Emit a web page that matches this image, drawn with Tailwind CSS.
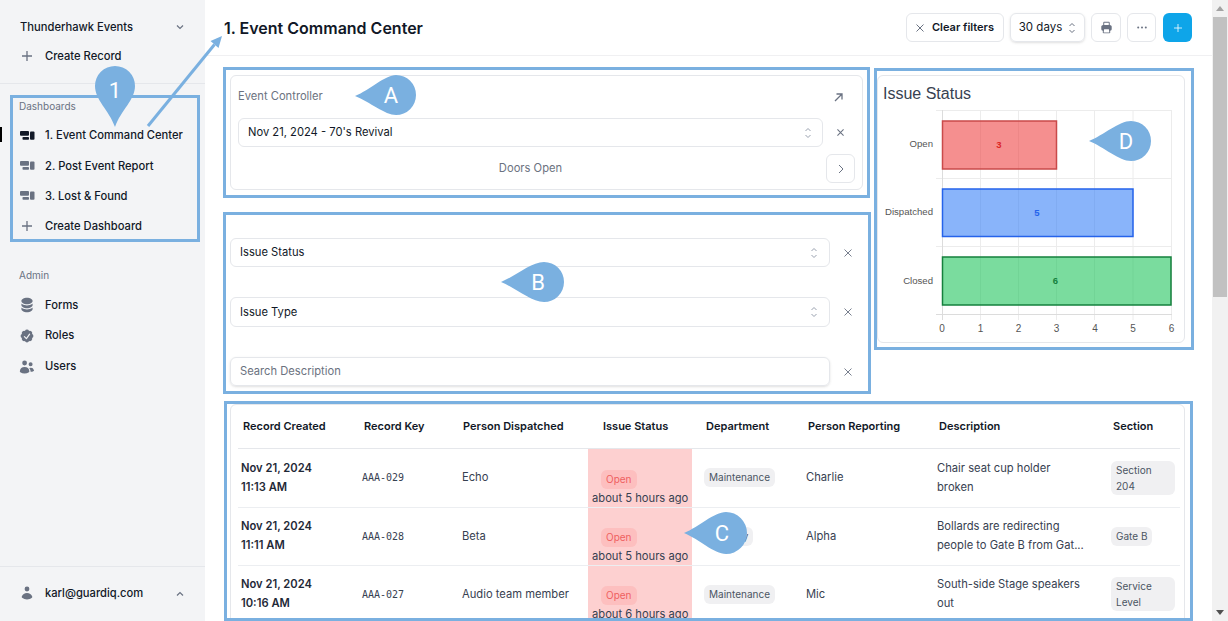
<!DOCTYPE html>
<html lang="en">
<head>
  <meta charset="UTF-8">
  <meta name="viewport" content="width=device-width, initial-scale=1.0">
  <title>Event Command Center</title>
  <script src="https://cdn.jsdelivr.net/npm/@tailwindcss/browser@4"></script>
</head>
<body class="bg-white overflow-hidden">
<div class="relative flex w-[1228px] h-[621px] overflow-hidden font-['Inter',sans-serif] text-[11.2px] text-gray-900">

  <!-- Sidebar -->
  <aside class="w-[205px] shrink-0 h-full bg-[#f3f4f6] flex flex-col font-medium text-[#111827]">
    <div class="h-[84px] shrink-0 border-b border-[#e5e7eb] pt-[13px] px-[20px]">
      <div class="flex items-center justify-between h-[28px]">
        <span>Thunderhawk Events</span>
        <svg class="w-[10px] h-[10px] text-gray-500" viewBox="0 0 10 10" fill="none" stroke="currentColor" stroke-width="1.2"><path d="M2 3.5 5 6.5 8 3.5"/></svg>
      </div>
      <div class="flex items-center h-[30px] gap-[13px]">
        <svg class="w-[10px] h-[10px] ml-[2px] text-gray-500" viewBox="0 0 10 10" fill="none" stroke="currentColor" stroke-width="1.3"><path d="M5 0v10M0 5h10"/></svg>
        <span>Create Record</span>
      </div>
    </div>

    <div class="pt-[16px] px-[19px]">
      <div class="h-[13px] text-[10px] leading-[13px] text-gray-500 font-normal">Dashboards</div>
      <div class="relative flex items-center h-[31px] mt-[7px] gap-[10px]">
        <span class="absolute left-[-19px] top-[7px] w-[2px] h-[15px] bg-black"></span>
        <svg class="w-4 h-4 text-[#111827]" viewBox="0 0 16 16" fill="currentColor"><rect x="1" y="3" width="9" height="4.7" rx="1"/><rect x="3.5" y="9" width="6.5" height="2.8" rx=".8"/><rect x="11" y="3.5" width="4.5" height="8.3" rx="1"/></svg>
        <span>1. Event Command Center</span>
      </div>
      <div class="flex items-center h-[30px] gap-[10px]">
        <svg class="w-4 h-4 text-gray-500" viewBox="0 0 16 16" fill="currentColor"><rect x="1" y="3" width="9" height="4.7" rx="1"/><rect x="3.5" y="9" width="6.5" height="2.8" rx=".8"/><rect x="11" y="3.5" width="4.5" height="8.3" rx="1"/></svg>
        <span>2. Post Event Report</span>
      </div>
      <div class="flex items-center h-[30px] gap-[10px]">
        <svg class="w-4 h-4 text-gray-500" viewBox="0 0 16 16" fill="currentColor"><rect x="1" y="3" width="9" height="4.7" rx="1"/><rect x="3.5" y="9" width="6.5" height="2.8" rx=".8"/><rect x="11" y="3.5" width="4.5" height="8.3" rx="1"/></svg>
        <span>3. Lost &amp; Found</span>
      </div>
      <div class="flex items-center h-[30px] gap-[13px]">
        <svg class="w-[10px] h-[10px] ml-[3px] text-gray-500" viewBox="0 0 10 10" fill="none" stroke="currentColor" stroke-width="1.3"><path d="M5 0v10M0 5h10"/></svg>
        <span>Create Dashboard</span>
      </div>
    </div>

    <div class="pt-[28px] px-[19px] flex-1">
      <div class="h-[13px] text-[10px] leading-[13px] text-gray-500 font-normal">Admin</div>
      <div class="flex items-center h-[30px] mt-[8px] gap-[10px]">
        <svg class="w-4 h-4 text-gray-500" viewBox="0 0 20 20" fill="currentColor"><path d="M10 1c3.866 0 7 1.79 7 4s-3.134 4-7 4-7-1.79-7-4 3.134-4 7-4zm5.694 8.13c.464-.264.91-.583 1.306-.952V10c0 2.21-3.134 4-7 4s-7-1.79-7-4V8.178c.396.37.842.688 1.306.953C5.838 10.006 7.854 10.5 10 10.5s4.162-.494 5.694-1.37zM3 13.179V15c0 2.21 3.134 4 7 4s7-1.79 7-4v-1.822c-.396.37-.842.688-1.306.953-1.532.875-3.548 1.369-5.694 1.369s-4.162-.494-5.694-1.37A7.009 7.009 0 013 13.179z"/></svg>
        <span>Forms</span>
      </div>
      <div class="flex items-center h-[31px] gap-[10px]">
        <svg class="w-4 h-4 text-gray-500" viewBox="0 0 20 20" fill="currentColor"><path fill-rule="evenodd" clip-rule="evenodd" d="M16.403 12.652a3 3 0 000-5.304 3 3 0 00-3.75-3.751 3 3 0 00-5.305 0 3 3 0 00-3.751 3.75 3 3 0 000 5.305 3 3 0 003.75 3.751 3 3 0 005.305 0 3 3 0 003.751-3.75zm-2.546-4.46a.75.75 0 00-1.214-.883l-3.483 4.79-1.88-1.88a.75.75 0 10-1.06 1.061l2.5 2.5a.75.75 0 001.137-.089l4-5.5z"/></svg>
        <span>Roles</span>
      </div>
      <div class="flex items-center h-[31px] gap-[10px]">
        <svg class="w-4 h-4 text-gray-500" viewBox="0 0 20 20" fill="currentColor"><path d="M7 8a3 3 0 100-6 3 3 0 000 6zM14.5 9a2.5 2.5 0 100-5 2.5 2.5 0 000 5zM1.615 16.428a1.224 1.224 0 01-.569-1.175 6.002 6.002 0 0111.908 0c.058.467-.172.92-.57 1.174A9.953 9.953 0 017 18a9.953 9.953 0 01-5.385-1.572zM14.5 16h-.106c.07-.297.088-.611.048-.933a7.47 7.47 0 00-1.588-3.755 4.502 4.502 0 015.874 2.636.818.818 0 01-.36.98A7.465 7.465 0 0114.5 16z"/></svg>
        <span>Users</span>
      </div>
    </div>

    <div class="h-[55px] shrink-0 border-t border-[#e5e7eb] px-[19px] flex items-center justify-between pb-[1px]">
      <div class="flex items-center gap-[10px]">
        <svg class="w-4 h-4 text-gray-500" viewBox="0 0 20 20" fill="currentColor"><path d="M10 8a3 3 0 100-6 3 3 0 000 6zM3.465 14.493a1.23 1.23 0 00.41 1.412A9.957 9.957 0 0010 18c2.31 0 4.438-.784 6.125-2.095a1.23 1.23 0 00.41-1.412A6.997 6.997 0 0010 10a6.997 6.997 0 00-6.535 4.493z"/></svg>
        <span>karl@guardiq.com</span>
      </div>
      <svg class="w-[10px] h-[10px] mr-[1px] text-gray-500" viewBox="0 0 10 10" fill="none" stroke="currentColor" stroke-width="1.2"><path d="M2 6.5 5 3.5 8 6.5"/></svg>
    </div>
  </aside>

  <!-- Main -->
  <main class="w-[1007px] shrink-0 h-full flex flex-col overflow-hidden">
    <header class="h-[56px] shrink-0 border-b border-[#f0f0f2] pl-[19px] pr-[20px] flex items-center justify-between">
      <h1 class="text-[16px] font-semibold text-[#111827]">1. Event Command Center</h1>
      <div class="flex items-center gap-[6px]">
        <button class="h-[29px] w-[98px] flex items-center justify-center gap-[8px] border border-[#e5e7eb] rounded-md font-semibold text-[11px] text-[#111827]">
          <svg class="w-[8px] h-[8px] text-gray-500" viewBox="0 0 8 8" fill="none" stroke="currentColor" stroke-width="1"><path d="M.5.5l7 7M7.5.5l-7 7"/></svg>
          Clear filters
        </button>
        <button class="h-[29px] w-[75px] flex items-center justify-center gap-[6px] border border-[#e5e7eb] shadow-sm rounded-md text-[11.5px] text-[#111827]">
          30 days
          <svg class="w-[8px] h-[12px] text-gray-500" viewBox="0 0 8 12" fill="none" stroke="currentColor" stroke-width="1"><path d="M1.5 4 4 1.5 6.5 4M1.5 8 4 10.5 6.5 8"/></svg>
        </button>
        <button class="h-[29px] w-[30px] flex items-center justify-center border border-[#e5e7eb] rounded-md">
          <svg class="w-[13px] h-[13px] text-gray-500" viewBox="0 0 20 20" fill="currentColor"><path fill-rule="evenodd" clip-rule="evenodd" d="M5 2.75C5 1.784 5.784 1 6.75 1h6.5c.966 0 1.75.784 1.75 1.75v3.552c.377.046.752.097 1.126.153A2.212 2.212 0 0118 8.653v4.097A2.25 2.25 0 0115.75 15h-.241l.305 1.984A1.75 1.75 0 0114.084 19H5.915a1.75 1.75 0 01-1.73-2.016L4.492 15H4.25A2.25 2.25 0 012 12.75V8.653c0-1.082.775-2.034 1.874-2.198.374-.056.75-.107 1.127-.153L5 2.75zm8.5 3.397a41.533 41.533 0 00-7 0V2.75a.25.25 0 01.25-.25h6.5a.25.25 0 01.25.25v3.397zM6.608 12.5a.25.25 0 00-.247.212l-.693 4.5a.25.25 0 00.247.288h8.17a.25.25 0 00.246-.288l-.692-4.5a.25.25 0 00-.247-.212H6.608z"/></svg>
        </button>
        <button class="h-[29px] w-[29px] flex items-center justify-center border border-[#e5e7eb] rounded-md">
          <svg class="w-[10px] h-[3px] text-gray-500" viewBox="0 0 10 3" fill="currentColor"><circle cx="1.2" cy="1.5" r="1"/><circle cx="5" cy="1.5" r="1"/><circle cx="8.8" cy="1.5" r="1"/></svg>
        </button>
        <button class="h-[29px] w-[29px] flex items-center justify-center rounded-md bg-[#0ea5e9] ml-[1px]">
          <svg class="w-[8px] h-[8px] text-white/80" viewBox="0 0 8 8" fill="none" stroke="currentColor" stroke-width="1"><path d="M4 0v8M0 4h8"/></svg>
        </button>
      </div>
    </header>

    <div class="pl-[25px] pt-[19px] flex-1 min-h-0 flex flex-col">
      <div class="flex gap-[14px] h-[329px] shrink-0">
        <!-- Left column -->
        <div class="w-[633px] shrink-0">
          <section class="h-[115px] border border-[#e5e7eb] rounded-md px-[7px] relative">
            <div class="flex items-center justify-between h-[42px] pr-[12px]">
              <span class="text-[#6b7280] mb-[2px]">Event Controller</span>
              <svg class="w-[9px] h-[9px] text-gray-500" viewBox="0 0 9 9" fill="none" stroke="currentColor" stroke-width="1.3"><path d="M1 8 8 1M2.5 1H8v5.5"/></svg>
            </div>
            <div class="flex items-center">
              <div class="w-[585px] h-[29px] border border-[#e5e7eb] rounded-md px-[9px] flex items-center justify-between">
                <span class="text-[#111827]">Nov 21, 2024 - 70's Revival</span>
                <svg class="w-[8px] h-[12px] mr-[1px] text-gray-400" viewBox="0 0 8 12" fill="none" stroke="currentColor" stroke-width="1"><path d="M1.5 4 4 1.5 6.5 4M1.5 8 4 10.5 6.5 8"/></svg>
              </div>
              <svg class="w-[7px] h-[7px] ml-[14px] text-gray-500" viewBox="0 0 8 8" fill="none" stroke="currentColor" stroke-width="1.2"><path d="M.5.5l7 7M7.5.5l-7 7"/></svg>
            </div>
            <div class="flex items-center justify-center h-[30px] mt-[6px] text-[#6b7280] pr-[32px]">Doors Open</div>
            <button class="absolute right-[7px] top-[78px] w-[29px] h-[29px] border border-[#e5e7eb] rounded-md flex items-center justify-center">
              <svg class="w-[6px] h-[10px] text-gray-500" viewBox="0 0 6 10" fill="none" stroke="currentColor" stroke-width="1"><path d="M1 1l4 4-4 4"/></svg>
            </button>
          </section>

          <section class="pt-[48px] flex flex-col gap-[30px]">
            <div class="flex items-center">
              <div class="w-[600px] h-[29px] border border-[#e5e7eb] rounded-md px-[9px] flex items-center justify-between">
                <span class="text-[#111827]">Issue Status</span>
                <svg class="w-[8px] h-[12px] mr-[2px] text-gray-400" viewBox="0 0 8 12" fill="none" stroke="currentColor" stroke-width="1"><path d="M1.5 4 4 1.5 6.5 4M1.5 8 4 10.5 6.5 8"/></svg>
              </div>
              <svg class="w-[8px] h-[8px] ml-[14px] text-gray-500" viewBox="0 0 8 8" fill="none" stroke="currentColor" stroke-width=".9"><path d="M.5.5l7 7M7.5.5l-7 7"/></svg>
            </div>
            <div class="flex items-center">
              <div class="w-[600px] h-[30px] border border-[#e5e7eb] rounded-md px-[9px] flex items-center justify-between">
                <span class="text-[#111827]">Issue Type</span>
                <svg class="w-[8px] h-[12px] mr-[2px] text-gray-400" viewBox="0 0 8 12" fill="none" stroke="currentColor" stroke-width="1"><path d="M1.5 4 4 1.5 6.5 4M1.5 8 4 10.5 6.5 8"/></svg>
              </div>
              <svg class="w-[8px] h-[8px] ml-[14px] text-gray-500" viewBox="0 0 8 8" fill="none" stroke="currentColor" stroke-width=".9"><path d="M.5.5l7 7M7.5.5l-7 7"/></svg>
            </div>
            <div class="flex items-center">
              <div class="w-[600px] h-[29px] border border-[#e5e7eb] shadow-sm rounded-md px-[9px] flex items-center">
                <span class="text-[#6b7280]">Search Description</span>
              </div>
              <svg class="w-[8px] h-[8px] ml-[14px] text-gray-500" viewBox="0 0 8 8" fill="none" stroke="currentColor" stroke-width=".9"><path d="M.5.5l7 7M7.5.5l-7 7"/></svg>
            </div>
          </section>
        </div>

        <!-- Chart -->
        <section class="w-[308px] h-[268px] shrink-0 border border-[#e5e7eb] rounded-md overflow-hidden">
          <svg width="306" height="266" viewBox="878 76 306 266" class="block font-['Liberation_Sans',sans-serif]">
            <text x="883" y="99" font-size="16" fill="#374151">Issue Status</text>
            <g stroke="#ececec" stroke-width="1">
              <path d="M936 110.5H1172M936 178.5H1172M936 246.5H1172"/>
              <path d="M980.5 110V320M1018.5 110V320M1056.5 110V320M1094.5 110V320M1133 110V320M1171.5 110V320"/>
            </g>
            <path d="M936 314.5H1172M942.5 110V320" stroke="#dcdcdc" stroke-width="1" fill="none"/>
            <rect x="942.5" y="121" width="114" height="48" fill="#ef4444" fill-opacity=".6" stroke="#c94a4a" stroke-width="1.5"/>
            <rect x="942.5" y="189" width="190.5" height="47.5" fill="#3b82f6" fill-opacity=".6" stroke="#2563eb" stroke-width="1.5"/>
            <rect x="942.5" y="257" width="228.5" height="48" fill="#22c55e" fill-opacity=".6" stroke="#15803d" stroke-width="1.5"/>
            <g font-size="9.5" text-anchor="middle" font-weight="bold">
              <text x="999" y="148" fill="#dc2626">3</text>
              <text x="1037" y="215.5" fill="#2563eb">5</text>
              <text x="1055.5" y="284" fill="#15803d">6</text>
            </g>
            <g font-size="9.6" text-anchor="end" fill="#555">
              <text x="933" y="147">Open</text>
              <text x="933" y="215">Dispatched</text>
              <text x="933" y="284">Closed</text>
            </g>
            <g font-size="10" text-anchor="middle" fill="#555">
              <text x="942" y="332">0</text>
              <text x="980.5" y="332">1</text>
              <text x="1018.5" y="332">2</text>
              <text x="1056.5" y="332">3</text>
              <text x="1095" y="332">4</text>
              <text x="1133" y="332">5</text>
              <text x="1171.5" y="332">6</text>
            </g>
          </svg>
        </section>
      </div>

      <!-- Table -->
      <section class="mr-[27px] flex-1 min-h-0 border border-[#e5e7eb] rounded-t-md px-[7px] overflow-hidden">
        <table class="table-fixed border-collapse w-[942px] text-[#374151] text-[11.2px]">
          <colgroup>
            <col class="w-[121px]"><col class="w-[100px]"><col class="w-[129px]"><col class="w-[104px]"><col class="w-[111px]"><col class="w-[131px]"><col class="w-[174px]"><col class="w-[72px]">
          </colgroup>
          <thead>
            <tr class="h-[43px] border-b border-[#e5e7eb] text-left text-[#111827] text-[11px] font-semibold">
              <th class="font-semibold pl-[5px]">Record Created</th>
              <th class="font-semibold pl-[5px]">Record Key</th>
              <th class="font-semibold pl-[4px]">Person Dispatched</th>
              <th class="font-semibold pl-[15px]">Issue Status</th>
              <th class="font-semibold pl-[14px]">Department</th>
              <th class="font-semibold pl-[5px]">Person Reporting</th>
              <th class="font-semibold pl-[5px]">Description</th>
              <th class="font-semibold pl-[5px]">Section</th>
            </tr>
          </thead>
          <tbody>
            <tr class="h-[59px] border-b border-[#eceef1]">
              <td class="pl-[3px] font-semibold text-[#1f2937] leading-[19px]">Nov 21, 2024<br>11:13 AM</td>
              <td class="pl-[3px] font-['DejaVu_Sans_Mono',monospace] text-[10px]">AAA-029</td>
              <td class="pl-[3px]">Echo</td>
              <td class="bg-[#fdd0d0] align-bottom pl-[4px]">
                <span class="inline-block ml-[9px] px-[5px] h-[19px] leading-[19px] rounded-md bg-[#fca5a5]/40 text-[#ef5f5f] text-[10px]">Open</span>
                <div class="leading-[18px] whitespace-nowrap">about 5 hours ago</div>
              </td>
              <td class="pl-[12px]"><span class="inline-block px-[5px] h-[19px] leading-[19px] rounded-md bg-[#f0f0f2] text-[#4b5563] text-[10px]">Maintenance</span></td>
              <td class="pl-[3px]">Charlie</td>
              <td class="pl-[3px] leading-[19px]">Chair seat cup holder<br>broken</td>
              <td class="pl-[3px]"><span class="inline-block w-[64px] px-[5px] py-[1px] leading-[16px] rounded-md bg-[#f0f0f2] text-[#4b5563] text-[10px]">Section 204</span></td>
            </tr>
            <tr class="h-[58px] border-b border-[#eceef1]">
              <td class="pl-[3px] font-semibold text-[#1f2937] leading-[19px]">Nov 21, 2024<br>11:11 AM</td>
              <td class="pl-[3px] font-['DejaVu_Sans_Mono',monospace] text-[10px]">AAA-028</td>
              <td class="pl-[3px]">Beta</td>
              <td class="bg-[#fdd0d0] align-bottom pl-[4px]">
                <span class="inline-block ml-[9px] px-[5px] h-[19px] leading-[19px] rounded-md bg-[#fca5a5]/40 text-[#ef5f5f] text-[10px]">Open</span>
                <div class="leading-[18px] whitespace-nowrap">about 5 hours ago</div>
              </td>
              <td class="pl-[12px]"><span class="inline-block px-[5px] h-[19px] leading-[19px] rounded-md bg-[#f0f0f2] text-[#4b5563] text-[10px]">Security</span></td>
              <td class="pl-[3px]">Alpha</td>
              <td class="pl-[3px] leading-[19px]">Bollards are redirecting<br>people to Gate B from Gat...</td>
              <td class="pl-[3px]"><span class="inline-block px-[5px] h-[19px] leading-[19px] rounded-md bg-[#f0f0f2] text-[#4b5563] text-[10px]">Gate B</span></td>
            </tr>
            <tr class="h-[58px]">
              <td class="pl-[3px] font-semibold text-[#1f2937] leading-[19px]">Nov 21, 2024<br>10:16 AM</td>
              <td class="pl-[3px] font-['DejaVu_Sans_Mono',monospace] text-[10px]">AAA-027</td>
              <td class="pl-[3px]">Audio team member</td>
              <td class="bg-[#fdd0d0] align-bottom pl-[4px]">
                <span class="inline-block ml-[9px] px-[5px] h-[19px] leading-[19px] rounded-md bg-[#fca5a5]/40 text-[#ef5f5f] text-[10px]">Open</span>
                <div class="leading-[18px] whitespace-nowrap">about 6 hours ago</div>
              </td>
              <td class="pl-[12px]"><span class="inline-block px-[5px] h-[19px] leading-[19px] rounded-md bg-[#f0f0f2] text-[#4b5563] text-[10px]">Maintenance</span></td>
              <td class="pl-[3px]">Mic</td>
              <td class="pl-[3px] leading-[19px]">South-side Stage speakers<br>out</td>
              <td class="pl-[3px]"><span class="inline-block w-[64px] px-[5px] py-[1px] leading-[16px] rounded-md bg-[#f0f0f2] text-[#4b5563] text-[10px]">Service Level</span></td>
            </tr>
          </tbody>
        </table>
      </section>
    </div>
  </main>

  <!-- Scrollbar -->
  <div class="w-[16px] shrink-0 h-full bg-[#f1f1f1] flex flex-col items-center justify-between">
    <div class="w-full flex flex-col items-center">
      <div class="h-[17px] flex items-center justify-center">
        <svg class="w-[8px] h-[5px] text-[#a3a3a3]" viewBox="0 0 8 5" fill="currentColor"><path d="M4 0l4 5H0z"/></svg>
      </div>
      <div class="w-[14px] h-[280px] bg-[#c1c1c1]"></div>
    </div>
    <div class="h-[17px] flex items-center justify-center">
      <svg class="w-[8px] h-[5px] text-[#505050]" viewBox="0 0 8 5" fill="currentColor"><path d="M0 0h8L4 5z"/></svg>
    </div>
  </div>

  <!-- Annotation boxes and callouts drawn over the screenshot -->
  <div class="absolute left-[10px] top-[95px] w-[190px] h-[147px] border-[3px] border-[#7ab0e0]"></div>
  <div class="absolute left-[223px] top-[67px] w-[647px] h-[131px] border-[3px] border-[#7ab0e0]"></div>
  <div class="absolute left-[223px] top-[212px] w-[648px] h-[182px] border-[3px] border-[#7ab0e0]"></div>
  <div class="absolute left-[874px] top-[68px] w-[320px] h-[282px] border-[3px] border-[#7ab0e0]"></div>
  <div class="absolute left-[224px] top-[401px] w-[969px] h-[220px] border-[3px] border-[#7ab0e0]"></div>

  <svg class="absolute inset-0 pointer-events-none" width="1228" height="621" viewBox="0 0 1228 621">
    <g fill="#7ab0e0">
      <path d="M115 127C109 110 95 100 95 86A20 20 0 0 1 135 86C135 100 121 110 115 127Z"/>
      <path d="M355 96C370 90 385 75 396 75A20 20 0 0 1 396 115C385 115 370 102 355 96Z"/>
      <path d="M501 282C516 276 531 262 544 262A20 20 0 0 1 544 302C531 302 516 288 501 282Z"/>
      <path d="M684 533C699 527 714 512 726 512A21 21 0 0 1 726 554C714 554 699 539 684 533Z"/>
      <path d="M1089 141C1104 135 1119 121 1131 121A20 20 0 0 1 1131 161C1119 161 1104 147 1089 141Z"/>
      <path d="M222 36 218.5 48 210.5 41Z"/>
    </g>
    <path d="M148 126 214.5 44.5" stroke="#7ab0e0" stroke-width="3" fill="none"/>
    <g fill="#fff" font-size="22" text-anchor="middle" font-family="Roboto, sans-serif">
      <text x="115" y="98">1</text>
      <text x="391" y="103">A</text>
      <text x="538" y="290">B</text>
      <text x="722" y="541">C</text>
      <text x="1126" y="149">D</text>
    </g>
  </svg>
</div>
</body>
</html>
